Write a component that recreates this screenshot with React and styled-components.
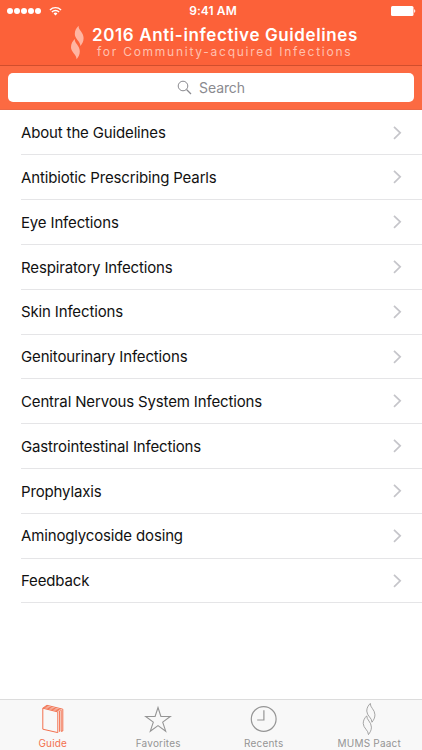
import React from 'react';
import styled, { createGlobalStyle } from 'styled-components';

const GlobalStyle = createGlobalStyle`
  * {
    box-sizing: border-box;
  }

  body {
    margin: 0;
    background: #fff;
    font-family: Inter, 'Liberation Sans', sans-serif;
  }
`;

const Screen = styled.div`
  display: flex;
  flex-direction: column;
  width: 422px;
  height: 750px;
  overflow: hidden;
  background: #fff;
`;

const Header = styled.header`
  height: 66px;
  background: #fc6139;
  border-bottom: 1px solid #d04e2d;
  color: #fff;
`;

const StatusBar = styled.div`
  display: grid;
  grid-template-columns: 1fr auto 1fr;
  align-items: center;
  height: 22px;
  padding: 0 6px 0 7px;
`;

const Signal = styled.div`
  display: flex;
  align-items: center;
  gap: 1px;

  svg {
    margin-left: 7px;
  }
`;

const Dot = styled.span`
  width: 6px;
  height: 6px;
  border-radius: 50%;
  background: #fff;
`;

const Time = styled.span`
  padding-left: 3px;
  font-size: 12px;
  font-weight: 600;
  line-height: 22px;
  letter-spacing: 0.1px;
`;

const Battery = styled.svg`
  justify-self: end;
`;

const Brand = styled.div`
  display: flex;
  align-items: flex-start;
  padding: 3px 0 0 70px;
`;

const Titles = styled.div`
  padding-left: 7px;
`;

const Title = styled.h1`
  margin: 0;
  font-size: 17px;
  font-weight: 600;
  line-height: 20px;
  letter-spacing: 0.61px;
  white-space: nowrap;
`;

const Subtitle = styled.div`
  padding-left: 5px;
  color: #ffc0af;
  font-size: 12px;
  line-height: 13px;
  letter-spacing: 1.74px;
  white-space: nowrap;
`;

const SearchBar = styled.div`
  height: 44px;
  padding: 7px 8px;
  background: #fc6a42;
  border-bottom: 1px solid #ec6846;
`;

const SearchField = styled.div`
  display: flex;
  align-items: center;
  justify-content: center;
  gap: 7px;
  height: 29px;
  border-radius: 5px;
  background: #fff;
  color: #8a8a8f;
  font-size: 14px;
  line-height: 29px;
  letter-spacing: -0.1px;
`;

const List = styled.ul`
  flex: 1;
  margin: 0;
  padding: 0.5px 0 0 21px;
  list-style: none;
`;

const Row = styled.li`
  display: flex;
  align-items: center;
  justify-content: space-between;
  height: 44.82px;
  padding: 0.4px 20px 0 0;
  border-bottom: 1px solid #e5e5e7;
  color: #111;
  font-size: 15px;
  letter-spacing: -0.15px;
  white-space: nowrap;
`;

const TabBar = styled.nav`
  display: grid;
  grid-template-columns: repeat(4, 1fr);
  height: 51px;
  background: #f8f8f8;
  border-top: 1px solid #dcdcdc;
`;

const Tab = styled.div`
  display: flex;
  flex-direction: column;
  align-items: center;
  padding-top: 3px;
  color: ${(props) => (props.$active ? '#f3714f' : '#959595')};
`;

const TabLabel = styled.span`
  margin-top: 1px;
  font-size: 10px;
  line-height: 14px;
  letter-spacing: 0.2px;
`;

const FLAME = 'M8.6 .8C8.2 5 13.6 7.5 13.6 13C13.6 16.5 12.2 18.5 10.4 21C10.6 16.5 4.8 14 4.8 9C4.8 5.5 6.4 3 8.6 .8Z';

const FlameShape = () => (
  <>
    <path d={FLAME} />
    <path d={FLAME} transform="translate(-3.8 13.3)" />
  </>
);

const FlameLogo = () => (
  <svg width="15" height="36" viewBox="0 0 15 36" fill="#ffb5a1">
    <FlameShape />
  </svg>
);

const WifiIcon = () => (
  <svg width="13" height="10" viewBox="0 0 14 10" fill="none" stroke="#fff" strokeWidth="1.5">
    <path d="M1 3.8a8.6 8.6 0 0 1 12 0M3.1 6a5.6 5.6 0 0 1 7.8 0" />
    <path d="M7 9.8L4.9 7.6a3.1 3.1 0 0 1 4.2 0Z" fill="#fff" stroke="none" />
  </svg>
);

const SearchIcon = () => (
  <svg width="15" height="15" viewBox="0 0 15 15" fill="none" stroke="#8a8a8f">
    <circle cx="6" cy="6" r="4.8" />
    <path d="M9.5 9.5L14 14" strokeWidth="1.3" />
  </svg>
);

const Chevron = () => (
  <svg width="9" height="14" viewBox="0 0 9 14" fill="none" stroke="#c5c5ca" strokeWidth="1.7">
    <path d="M1 .8L7.2 6.8L1 12.8" />
  </svg>
);

const BookIcon = () => (
  <svg width="32" height="32" viewBox="0 0 32 32" fill="none" stroke="currentColor" strokeWidth="1" strokeLinejoin="round">
    <path d="M5.8 5.2L20.8 8.9V29.6L5.8 26.2ZM5.8 5.2L9.9 2.3L25.8 6.2V28L24 28.3M7.2 4.4L22.6 8.1V28.8M8.5 3.4L24.2 7.2V28.2" />
  </svg>
);

const StarIcon = () => (
  <svg width="32" height="32" viewBox="0 0 32 32" fill="none" stroke="currentColor" strokeWidth="1.1">
    <path d="M16 4.5L18.9 13.5H28.3L20.7 19.1L23.7 28.2L16 22.6L8.3 28.2L11.3 19.1L3.7 13.5H13.1Z" />
  </svg>
);

const ClockIcon = () => (
  <svg width="32" height="32" viewBox="0 0 32 32" fill="none" stroke="currentColor" strokeWidth="1.2">
    <circle cx="15.7" cy="16" r="12.4" />
    <path d="M15.9 7.3V17H9.2" />
  </svg>
);

const FlameIcon = () => (
  <svg width="32" height="32" viewBox="0 0 32 32" fill="none" stroke="currentColor" strokeWidth=".9">
    <g transform="translate(9.3 -.3) scale(.93)">
      <FlameShape />
    </g>
  </svg>
);

const topics = [
  'About the Guidelines',
  'Antibiotic Prescribing Pearls',
  'Eye Infections',
  'Respiratory Infections',
  'Skin Infections',
  'Genitourinary Infections',
  'Central Nervous System Infections',
  'Gastrointestinal Infections',
  'Prophylaxis',
  'Aminoglycoside dosing',
  'Feedback',
];

const tabs = [
  { label: 'Guide', icon: <BookIcon />, active: true },
  { label: 'Favorites', icon: <StarIcon /> },
  { label: 'Recents', icon: <ClockIcon /> },
  { label: 'MUMS Paact', icon: <FlameIcon /> },
];

const App = () => (
  <>
    <GlobalStyle />
    <Screen>
      <Header>
        <StatusBar>
          <Signal>
            {[1, 2, 3, 4, 5].map((n) => <Dot key={n} />)}
            <WifiIcon />
          </Signal>
          <Time>9:41 AM</Time>
          <Battery width="26" height="10" viewBox="0 0 26 10" fill="#fff">
            <rect x="1" width="22.5" height="10" rx="1.5" />
            <path d="M24.2 3Q26.4 5 24.2 7Z" />
          </Battery>
        </StatusBar>
        <Brand>
          <FlameLogo />
          <Titles>
            <Title>2016 Anti-infective Guidelines</Title>
            <Subtitle>for Community-acquired Infections</Subtitle>
          </Titles>
        </Brand>
      </Header>
      <SearchBar>
        <SearchField>
          <SearchIcon />
          <span>Search</span>
        </SearchField>
      </SearchBar>
      <List>
        {topics.map((topic) => (
          <Row key={topic}>
            <span>{topic}</span>
            <Chevron />
          </Row>
        ))}
      </List>
      <TabBar>
        {tabs.map((tab) => (
          <Tab key={tab.label} $active={tab.active}>
            {tab.icon}
            <TabLabel>{tab.label}</TabLabel>
          </Tab>
        ))}
      </TabBar>
    </Screen>
  </>
);

export default App;
